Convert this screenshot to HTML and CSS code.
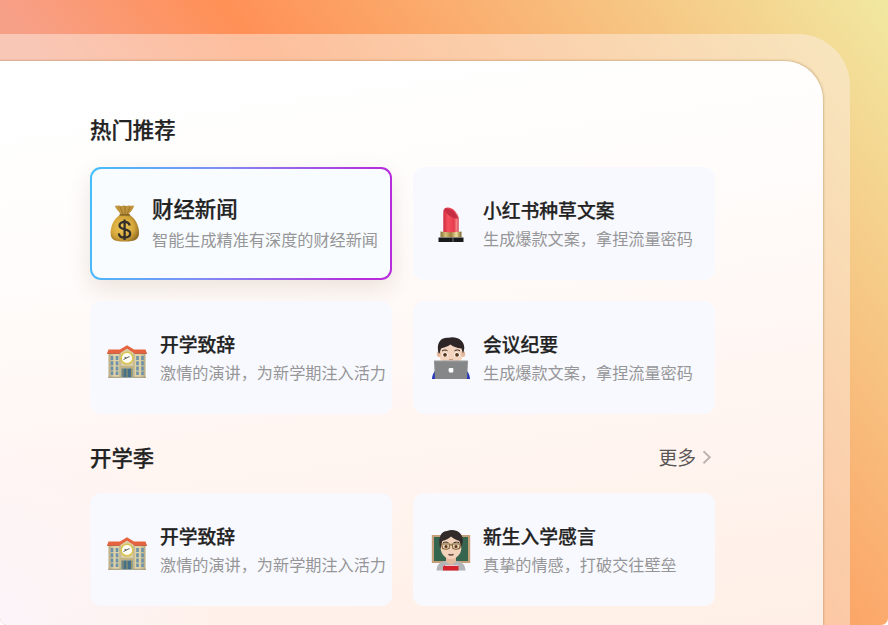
FILE: index.html
```html
<!DOCTYPE html>
<html lang="zh-CN">
<head>
    <meta charset="UTF-8">
    <meta name="viewport" content="width=device-width, initial-scale=1.0">
    <title>热门推荐</title>
    <link rel="stylesheet" href="styles.css">
</head>
<body>
    <!-- shared icon -->
    <svg class="defs" width="0" height="0">
        <defs>
            <linearGradient id="wall" x1="0" x2="1"><stop offset="0" stop-color="#b9ac82"/><stop offset=".15" stop-color="#ddd2a8"/><stop offset=".85" stop-color="#ddd2a8"/><stop offset="1" stop-color="#b5a87e"/></linearGradient>
            <symbol id="school" viewBox="0 0 40 34">
                <path d="M1.500 8h37v24.500h-37z" fill="url(#wall)"/>
                <path d="M13 6l7-4 7 4v26.500H13z" fill="#d9cda3"/>
                <path d="M13 8v24M27 8v24" stroke="#aa9e78" stroke-width=".8"/>
                <path d="M1.500 4.500H13L20 .3l7 4.200h11.500L40 8.500H27.500L20 3.500l-7.500 5H0z" fill="#e5633f"/>
                <path d="M0 8.500h12.500M27.500 8.500H40" stroke="#b8503a" stroke-width=".7"/>
                <path d="M5 11v19M10 11v19M30.500 11v19M35.500 11v19" stroke="#6c91a8" stroke-width="2.600" stroke-dasharray="4 1.200"/>
                <circle cx="20" cy="13" r="6.600" fill="#dcc452"/>
                <circle cx="20" cy="13" r="5.100" fill="#fffef8"/>
                <path d="M22.500 11.500L19.500 13l-3 1.500M19.500 13l-2-.7" stroke="#393b3c" stroke-width=".8" fill="none"/>
                <path d="M13.500 21h13v2.500h-13z" fill="#bfb285"/>
                <path d="M14.500 23.500h11v9h-11z" fill="#44708c"/>
                <path d="M16 23.500v9M20 23.500v9M24.500 23.500v9" stroke="#b8a55c" stroke-width=".8"/>
                <path d="M1 32.300h13M26 32.300h13" stroke="#928765" stroke-width=".8"/>
            </symbol>
        </defs>
    </svg>

    <div class="frame">
        <main class="panel">
            <section class="section">
                <div class="section-head">
                    <h2>热门推荐</h2>
                </div>
                <div class="grid">
                    <div class="card featured">
                        <svg class="icon bag" viewBox="0 0 30 38">
                            <defs><radialGradient id="gold" cx=".42" cy=".48" r=".62"><stop offset="0" stop-color="#f0ca58"/><stop offset=".65" stop-color="#d5a63a"/><stop offset="1" stop-color="#936b24"/></radialGradient></defs>
                            <path d="M5 1.500c2 .8 3.500-.6 5 .2 2 .8 3-.9 5 0s3-.8 5 0c1.500.5 3-.6 4-.2-.5 4-3.500 6-5.500 9h-8C9 7 5.500 5 5 1.500z" fill="#bf943c"/>
                            <path d="M10 3l3 7M15 2v8M20 3l-3 7" stroke="#8b6825" stroke-width=".7"/>
                            <path d="M10.500 10.500h8.500C25 14 29 21 29 29c0 6-3 8.500-14.500 8.500S.6 35 .6 29c0-8 4-15 9.900-18.500z" fill="url(#gold)"/>
                            <path d="M10 10.800h9.500" stroke="#725019" stroke-width="1.300" stroke-linecap="round"/>
                            <path d="M19.700 21.500c-.5-2.500-2.500-3.600-5-3.600-3 0-5.200 1.500-5.200 3.700 0 5.500 10.700 2 10.700 8 0 2.400-2.200 4-5.600 4-3.300 0-5.500-1.600-5.800-4.200M14.600 15.500v20.500" fill="none" stroke="#332f2b" stroke-width="2.300"/>
                        </svg>
                        <div class="text">
                            <h3>财经新闻</h3>
                            <p>智能生成精准有深度的财经新闻</p>
                        </div>
                    </div>
                    <div class="card">
                        <svg class="icon" viewBox="0 0 40 44">
                            <defs>
                                <linearGradient id="red" x1="0" x2="1"><stop offset="0" stop-color="#cf2a40"/><stop offset=".3" stop-color="#f4505d"/><stop offset=".7" stop-color="#e63c4e"/><stop offset=".88" stop-color="#f58a8a"/><stop offset="1" stop-color="#cd3345"/></linearGradient>
                                <linearGradient id="brass" x1="0" x2="1"><stop offset="0" stop-color="#86713a"/><stop offset=".25" stop-color="#d9c178"/><stop offset=".5" stop-color="#9b803c"/><stop offset=".75" stop-color="#efdf9f"/><stop offset="1" stop-color="#796427"/></linearGradient>
                            </defs>
                            <path d="M12.300 31V10c0-3 2-4.700 4.700-4.500 5 .5 10 5 10.700 11V31z" fill="url(#red)"/>
                            <path d="M13.500 6.800c3-2.300 12.500 3 13.500 9.500-4 1.300-13-4-13.500-9.500z" fill="#c52e43"/>
                            <path d="M9.500 29.500c5 1 16 1 21 0v5.800h-21z" fill="url(#brass)"/>
                            <path d="M7.500 35.500h25v4.500h-25z" fill="#191a1b"/>
                            <path d="M22 35.500V40" stroke="#777" stroke-width="1"/>
                        </svg>
                        <div class="text">
                            <h3>小红书种草文案</h3>
                            <p>生成爆款文案，拿捏流量密码</p>
                        </div>
                    </div>
                    <div class="card">
                        <svg class="icon school"><use href="#school"/></svg>
                        <div class="text">
                            <h3>开学致辞</h3>
                            <p>激情的演讲，为新学期注入活力</p>
                        </div>
                    </div>
                    <div class="card">
                        <svg class="icon" viewBox="0 0 40 44">
                            <path d="M1 43c.5-6 3-10 9-11h20c6 1 8.500 5 9 11z" fill="#2536b8"/>
                            <ellipse cx="20" cy="17" rx="12" ry="13" fill="#f3d5bf"/>
                            <ellipse cx="7.800" cy="18" rx="2" ry="3" fill="#e5b99f"/>
                            <ellipse cx="32.200" cy="18" rx="2" ry="3" fill="#e5b99f"/>
                            <path d="M7.500 17C5 7 10 1 17 1.800 25-.7 35 4 33 14l-1 3.500-1.500-5c-5-.5-8.500-2-11-4-3 2.500-7.500 3-9.500 4L8.500 17.500z" fill="#2d2526"/>
                            <path d="M11 15c2-1.300 4-1.200 5.500-.2M23.500 14.800c2-1.100 4-1.200 5.500.2" stroke="#30251f" stroke-width="1" fill="none"/>
                            <ellipse cx="14" cy="18.800" rx="2.700" ry="2.200" fill="#fff"/>
                            <ellipse cx="26" cy="18.800" rx="2.700" ry="2.200" fill="#fff"/>
                            <circle cx="14" cy="18.800" r="1.900" fill="#563719"/>
                            <circle cx="26" cy="18.800" r="1.900" fill="#563719"/>
                            <path d="M18 23.500h4" stroke="#c99c84"/>
                            <path d="M3 24.700h34L36 43H4z" fill="#858789"/>
                            <path d="M3.500 25h33" stroke="#a5a7a9" stroke-width=".8"/>
                            <path d="M20 32.200c2-.8 3 .2 2.300 1.200-.5 1 .1 1.500.3 1.700-.9 2.200-1.500 1.400-2.600 1.400-1.400.7-2.700-1.400-2.500-3.100.3-1.200 1.400-1.600 2.500-1.200z" fill="#fff"/>
                        </svg>
                        <div class="text">
                            <h3>会议纪要</h3>
                            <p>生成爆款文案，拿捏流量密码</p>
                        </div>
                    </div>
                </div>
            </section>

            <section class="section">
                <div class="section-head">
                    <h2>开学季</h2>
                    <a class="more">更多
                        <svg width="10" height="16" viewBox="0 0 10 16"><path d="M1.500 2.200L7.800 8.200l-6.300 6" fill="none" stroke="#bdb3b0" stroke-width="1.900"/></svg>
                    </a>
                </div>
                <div class="grid">
                    <div class="card">
                        <svg class="icon school"><use href="#school"/></svg>
                        <div class="text">
                            <h3>开学致辞</h3>
                            <p>激情的演讲，为新学期注入活力</p>
                        </div>
                    </div>
                    <div class="card">
                        <svg class="icon" viewBox="0 0 40 44">
                            <path d="M.8 7h38.400v28H.8z" fill="#c49f78"/>
                            <path d="M3 9h34v24H3z" fill="#35654f"/>
                            <path d="M5.500 42.500c.5-6 3-8.500 9-9.500h11c6 1 8.500 3.500 9 9.500z" fill="#b2b4b8"/>
                            <path d="M15 28h10v6l-5 3-5-3z" fill="#e3b99e"/>
                            <ellipse cx="20" cy="19" rx="10.500" ry="12" fill="#f3d2bb"/>
                            <path d="M9.300 21C6.500 10 10 3 16 3c9-3.500 18 3 15.300 12.500L30 21l-1.500-8c-4-1-6.500-3-8.500-4.500-2 2.500-5.500 3.500-8.700 4.500z" fill="#332b2a"/>
                            <path d="M12 14.800c2-1 4-.8 5.500 0M22.500 14.800c2-.8 4-1 5.500 0" stroke="#30251f" fill="none"/>
                            <circle cx="15" cy="18.500" r="1.500" fill="#563719"/>
                            <circle cx="25" cy="18.500" r="1.500" fill="#563719"/>
                            <path d="M10.500 16h8.300l-.6 4.300q-3.200 2-6.600 0zM21.200 16h8.300l-1.100 4.300q-3.400 2-6.600 0zM18.800 17h2.400" fill="none" stroke="#7b6434" stroke-width="1.100"/>
                            <path d="M17.500 26.300q2.500 1.300 5 0" stroke="#563832" stroke-width="1.400" fill="none"/>
                            <path d="M12 38.500l2-1.200h13.500v5.200H12z" fill="#d5222d"/>
                            <path d="M14 37.500h13.500" stroke="#eee" stroke-width=".8"/>
                        </svg>
                        <div class="text">
                            <h3>新生入学感言</h3>
                            <p>真挚的情感，打破交往壁垒</p>
                        </div>
                    </div>
                </div>
            </section>
        </main>
    </div>
</body>
</html>
```
FILE: styles.css
```css
* {
    box-sizing: border-box;
}
html {
    background: #fff;
}
body {
    margin: 0;
    height: 625px;
    overflow: hidden;
    border-radius: 0 0 7px 7px;
    font-family: "Noto Sans CJK SC", sans-serif;
    color: #222;
    background: linear-gradient(53deg, #f7a088 375px, #ff9056 551px, #f1e8a0 1085px);
}
h2, h3, p {
    margin: 0;
    white-space: nowrap;
}
h2, h3 {
    -webkit-text-stroke: 0.25px #222;
}
.defs {
    display: block;
}
.frame {
    width: 850px;
    height: 591px;
    margin-top: 34px;
    padding: 27px 27px 0 0;
    border-radius: 0 52px 0 0;
    background: rgba(252, 238, 228, 0.5);
}
.panel {
    height: 564px;
    padding: 52px 0 0 90px;
    border-radius: 0 39px 0 0;
    background:
        radial-gradient(ellipse 220px 200px at 0 100%, rgba(250, 244, 252, 0.8), rgba(250, 244, 252, 0)),
        linear-gradient(172deg, #fff 5%, #fffdfc 25%, #fff5f1 65%, #ffefe6 100%);
    box-shadow: 0 0 2px 0.5px rgba(160, 120, 70, 0.38);
}
.section-head {
    display: flex;
    align-items: center;
    justify-content: space-between;
    width: 626px;
    height: 32px;
    margin-bottom: 22px;
}
.section-head h2 {
    font-size: 21.400px;
    font-weight: 500;
    line-height: 32px;
}
.section + .section {
    margin-top: 27px;
}
.section + .section .section-head {
    margin-bottom: 20px;
}
.more {
    display: flex;
    align-items: center;
    gap: 6px;
    padding-right: 4px;
    font-size: 18.800px;
    line-height: 32px;
    color: #5a5654;
}
.grid {
    display: grid;
    grid-template-columns: 302px 302px;
    grid-auto-rows: 113px;
    gap: 21px;
}
.card {
    display: flex;
    align-items: center;
    gap: 12px;
    padding-left: 18px;
    border-radius: 11px;
    background: #f8f9fe;
}
.icon {
    flex: none;
    width: 40px;
    height: 44px;
}
.school {
    height: 34px;
    margin: 8px 1px 0 -1px;
}
.card h3 {
    font-size: 18.800px;
    font-weight: 500;
    line-height: 28px;
}
.card p {
    font-size: 16.150px;
    font-weight: 400;
    line-height: 28px;
    color: #969698;
}
.featured {
    gap: 12px;
    border: 2px solid transparent;
    background: linear-gradient(#f8fcff, #f8fcff) padding-box, linear-gradient(100deg, #42c0fa, #7f8ef5 40%, #b52ddd 90%) border-box;
    box-shadow: 0 8px 22px rgba(100, 60, 30, 0.13);
}
.bag {
    width: 30px;
    height: 38px;
    margin-top: -2px;
}
.featured h3 {
    font-size: 21.400px;
    line-height: 31px;
}
.featured p {
    line-height: 32px;
}
```
